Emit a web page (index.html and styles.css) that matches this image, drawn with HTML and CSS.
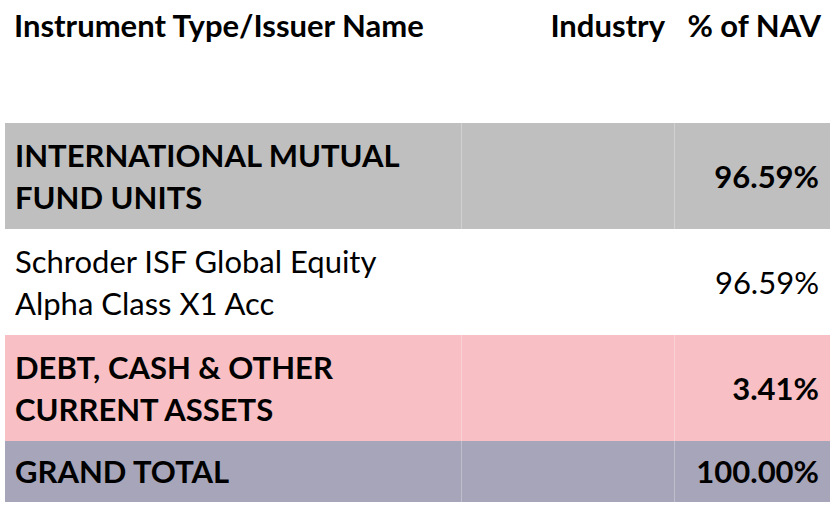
FILE: index.html
```html
<!DOCTYPE html>
<html>
<head>
<meta charset="utf-8">
<link rel="stylesheet" href="styles.css">
</head>
<body>
<table class="holdings">
  <colgroup>
    <col class="c-name">
    <col class="c-ind">
    <col class="c-nav">
  </colgroup>
  <thead>
    <tr class="head">
      <th class="name">Instrument Type/Issuer Name</th>
      <th class="num">Industry</th>
      <th class="num">% of NAV</th>
    </tr>
  </thead>
  <tbody>
    <tr class="group grey">
      <td class="name">INTERNATIONAL MUTUAL<br>FUND UNITS</td>
      <td></td>
      <td class="num">96.59%</td>
    </tr>
    <tr class="item">
      <td class="name">Schroder ISF Global Equity<br>Alpha Class X1 Acc</td>
      <td></td>
      <td class="num">96.59%</td>
    </tr>
    <tr class="group pink">
      <td class="name">DEBT, CASH &amp; OTHER<br>CURRENT ASSETS</td>
      <td></td>
      <td class="num">3.41%</td>
    </tr>
    <tr class="group total">
      <td class="name">GRAND TOTAL</td>
      <td></td>
      <td class="num">100.00%</td>
    </tr>
  </tbody>
</table>
</body>
</html>
```
FILE: styles.css
```css
html, body {
  margin: 0;
  padding: 0;
  background: #ffffff;
}
body {
  font-family: Lato, "Liberation Sans", sans-serif;
  color: #000;
}
.holdings {
  margin: 0 0 0 5px;
  width: 825px;
  border-collapse: collapse;
  table-layout: fixed;
  font-size: 31px;
  line-height: 42px;
}
.c-name { width: 456px; }
.c-ind { width: 213px; }
.c-nav { width: 156px; }

.holdings th {
  font-weight: 700;
  vertical-align: top;
  padding: 4px 9px 0 9px;
  height: 123px;
  text-align: left;
  box-sizing: border-box;
  white-space: nowrap;
}
.holdings th.num { text-align: right; }

.holdings td {
  padding: 11px 10px 11px 10px;
  vertical-align: middle;
  border-left: 1px solid rgba(255,255,255,0.28);
}
.holdings td:first-child { border-left: none; }
.holdings td.num { text-align: right; padding-right: 11px; }

.group td { font-weight: 700; }
.grey { background: #bfbfbf; }
.pink { background: #f8c0c4; }
.total { background: #a7a5ba; }
.total td { padding-top: 9px; padding-bottom: 10px; }
.item td { font-weight: 400; border-left-color: transparent; }
```
